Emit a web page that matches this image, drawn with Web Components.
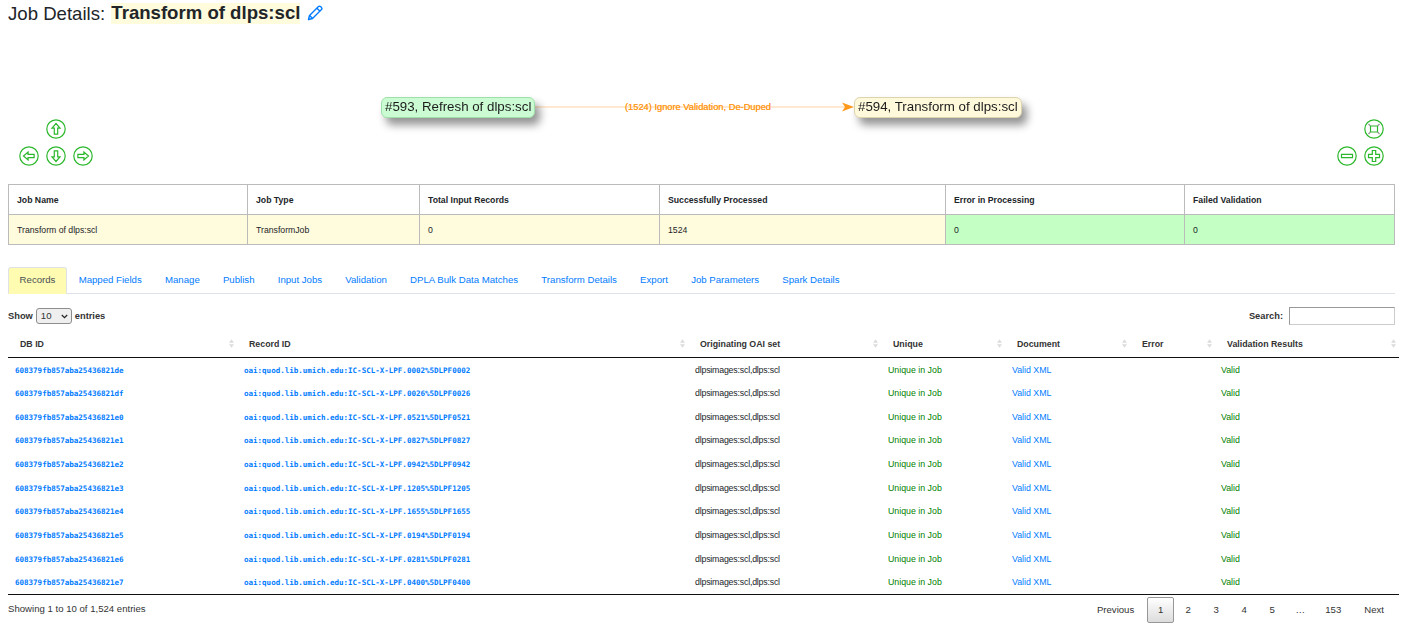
<!DOCTYPE html>
<html lang="en">
<head>
<meta charset="utf-8">
<title>Job Details</title>
<style>
  html, body { margin: 0; background: #fff; }
  body {
    padding: 0 22px 0 8px;
    width: 1387px;
    color: #212529;
    font-family: "Liberation Sans", Arial, sans-serif;
    overflow: hidden;
  }
</style>
</head>
<body>
<job-title>Transform of dlps:scl</job-title>
<job-graph></job-graph>
<job-stats></job-stats>
<job-tabs></job-tabs>
<records-table></records-table>
<records-footer></records-footer>

<script>
(function() {

  /**
   * Attach an open shadow root holding the given markup.
   */
  function stamp(el, html) {
    el.attachShadow({mode: 'open'}).innerHTML = html;
  }

  class JobTitle extends HTMLElement {
    constructor() {
      super();
      stamp(this, `<style>
        :host { display: flex; align-items: center; height: 27px; font-size: 18.6px; white-space: pre; }
        b { background: #fffbdd; padding: 2px 0 3px; line-height: 16px; margin-left: 1px; }
        svg { margin-left: 7px; margin-top: -1px; }
      </style>
      <span>Job Details: </span><b><slot></slot></b>
      <svg width="16" height="16" viewBox="0 0 16 16" fill="none" stroke="#007bff" stroke-width="1.4" stroke-linejoin="round">
        <path d="M1.5 14.5l1-4L11.5 1.6a1.5 1.5 0 0 1 2 0l1 1a1.5 1.5 0 0 1 0 2L5.5 13.5z"/>
        <path d="M10 3.2l3 3M2.6 10.4l3 3"/>
      </svg>`);
    }
  }

  // Nav button glyphs of the graph widget, on a 20x20 box.
  const NAV = {
    up: 'M10 4.5l4 4.6h-2.3v6h-3.4v-6H6z',
    down: 'M10 15.5l4-4.6h-2.3v-6H8.3v6H6z',
    left: 'M4.5 10l4.6-4v2.3h6v3.4h-6V14z',
    right: 'M15.5 10l-4.6-4v2.3h-6v3.4h6V14z',
    minus: 'M4.5 8.3h11v3.4h-11z',
    plus: 'M8.3 4.5h3.4v3.8h3.8v3.4h-3.8v3.8H8.3v-3.8H4.5V8.3h3.8z',
    fit: 'M6.5 7h7v6h-7z'
  };

  class NavButton extends HTMLElement {
    constructor() {
      super();
      const name = this.getAttribute('icon');
      const corners = name === 'fit'
        ? '<path d="M4.5 5l2 2M15.5 5l-2 2M4.5 15l2-2M15.5 15l-2-2" stroke="#999" stroke-width="1.4" fill="none"/>'
        : '';
      stamp(this, `<style>
        :host { display: block; position: absolute; width: 20px; height: 20px; }
        svg { display: block; }
      </style>
      <svg width="20" height="20" viewBox="0 0 20 20" fill="#fff" stroke="#2cb82c" stroke-width="1.2">
        <circle cx="10" cy="10" r="9.2"/>
        <path d="${NAV[name]}"/>
        ${corners}
      </svg>`);
    }
  }

  class GraphNode extends HTMLElement {
    constructor() {
      super();
      stamp(this, `<style>
        :host {
          display: block; position: absolute; box-sizing: border-box; height: 21px;
          padding: 0 3px; font-size: 13.3px; line-height: 17px; white-space: nowrap;
          border: 1px solid var(--edge); background: var(--fill); border-radius: 6px;
          color: #1c1c1c; box-shadow: 5px 7px 8px rgba(0,0,0,.42);
          filter: blur(.25px);
        }
      </style><slot></slot>`);
    }
  }

  class JobGraph extends HTMLElement {
    constructor() {
      super();
      stamp(this, `<style>
        :host { display: block; position: relative; height: 157px; }
        svg.edge { position: absolute; left: 0; top: 0; }
        .label {
          position: absolute; left: 608px; top: 75px; width: 164px; text-align: center;
          font-size: 9.3px; line-height: 11px; color: #ff9a1f; white-space: nowrap;
          text-shadow: 0 0 .6px #ff9a1f, 0 0 1px #fff;
        }
        graph-node:nth-of-type(1) { left: 373px; top: 70px; width: 154px; --fill: #cbfbd2; --edge: #9fe0aa; }
        graph-node:nth-of-type(2) { left: 846px; top: 70px; width: 168px; --fill: #fff9dc; --edge: #ddd3ad; }
        nav-button[icon=up] { left: 38px; top: 92px; }
        nav-button[icon=left] { left: 11px; top: 119px; }
        nav-button[icon=down] { left: 38px; top: 119px; }
        nav-button[icon=right] { left: 65px; top: 119px; }
        nav-button[icon=fit] { left: 1356px; top: 92px; }
        nav-button[icon=minus] { left: 1329px; top: 119px; }
        nav-button[icon=plus] { left: 1356px; top: 119px; }
      </style>
      <svg class="edge" width="1387" height="157" fill="none">
        <path d="M526 80H838" stroke="#ffd3a1" stroke-width="1.2"/>
        <path d="M846 80l-12-4.5 3 4.5-3 4.5z" fill="#ff9a1f"/>
      </svg>
      <graph-node>#593, Refresh of dlps:scl</graph-node>
      <graph-node>#594, Transform of dlps:scl</graph-node>
      <span class="label">(1524) Ignore Validation, De-Duped</span>
      <nav-button icon="up"></nav-button>
      <nav-button icon="left"></nav-button>
      <nav-button icon="down"></nav-button>
      <nav-button icon="right"></nav-button>
      <nav-button icon="fit"></nav-button>
      <nav-button icon="minus"></nav-button>
      <nav-button icon="plus"></nav-button>`);
    }
  }

  class JobStats extends HTMLElement {
    constructor() {
      super();
      const cols = [
        ['Job Name', 'Transform of dlps:scl', 239],
        ['Job Type', 'TransformJob', 172],
        ['Total Input Records', '0', 240],
        ['Successfully Processed', '1524', 286],
        ['Error in Processing', '0', 239, 'ok'],
        ['Failed Validation', '0', 210, 'ok']
      ];
      stamp(this, `<style>
        :host { display: block; font-size: 8.7px; }
        table { border-collapse: collapse; table-layout: fixed; width: 1386px; }
        th, td { border: 1px solid #bbb; height: 30px; padding: 0 8px; text-align: left; box-sizing: border-box; }
        th { font-weight: bold; }
        td { background: #fffbdd; }
        td.ok { background: #c4ffc4; }
      </style>
      <table>
        <colgroup>${cols.map(c => `<col style="width:${c[2]}px">`).join('')}</colgroup>
        <tr>${cols.map(c => `<th>${c[0]}</th>`).join('')}</tr>
        <tr>${cols.map(c => `<td class="${c[3] || ''}">${c[1]}</td>`).join('')}</tr>
      </table>`);
    }
  }

  class JobTabs extends HTMLElement {
    constructor() {
      super();
      const tabs = ['Records', 'Mapped Fields', 'Manage', 'Publish', 'Input Jobs', 'Validation',
        'DPLA Bulk Data Matches', 'Transform Details', 'Export', 'Job Parameters', 'Spark Details'];
      stamp(this, `<style>
        :host {
          display: flex; margin-top: 22px; height: 27px; box-sizing: border-box;
          border-bottom: 1px solid #dee2e6; font-size: 9.64px;
        }
        a {
          box-sizing: border-box; height: 27px; padding: 0 10.6px; line-height: 24px;
          color: #007bff; border: 1px solid transparent; border-radius: 3px 3px 0 0;
          text-decoration: none; white-space: nowrap;
        }
        a.active { background: #fffbb0; color: #495057; border-color: #dee2e6 #dee2e6 #fffbb0; }
      </style>
      ${tabs.map((t, i) => `<a href="#" class="${i ? '' : 'active'}">${t}</a>`).join('')}`);
    }
  }

  class RecordsTable extends HTMLElement {
    constructor() {
      super();
      const heads = [['DB ID', 229], ['Record ID', 451], ['Originating OAI set', 193], ['Unique', 124],
        ['Document', 125], ['Error', 85], ['Validation Results', 184]];
      const rows = [
        ['de', '0002%5DLPF0002'], ['df', '0026%5DLPF0026'], ['e0', '0521%5DLPF0521'],
        ['e1', '0827%5DLPF0827'], ['e2', '0942%5DLPF0942'], ['e3', '1205%5DLPF1205'],
        ['e4', '1655%5DLPF1655'], ['e5', '0194%5DLPF0194'], ['e6', '0281%5DLPF0281'],
        ['e7', '0400%5DLPF0400']
      ];
      const sorter = `<svg class="sort" width="5" height="9" viewBox="0 0 6 10" fill="#dcdcdc"><path d="M3 0l3 4H0zM3 10L0 6h6z"/></svg>`;
      stamp(this, `<style>
        :host { display: block; font-size: 8.8px; }
        .top {
          display: flex; justify-content: space-between; align-items: center;
          height: 20px; margin-top: 12px; font-weight: bold; color: #333; font-size: 9.3px;
        }
        .top label { display: flex; align-items: center; gap: 3px; }
        .select {
          box-sizing: border-box; width: 36px; height: 16px; border: 1px solid #8d8d8d; border-radius: 3px;
          background: #efefef; font-weight: normal; font-size: 9.6px; padding-left: 4px; line-height: 14px;
          display: flex; align-items: center; justify-content: space-between; padding-right: 3px;
        }
        .search { box-sizing: border-box; width: 106px; height: 18px; border: 1px solid #999; border-bottom-color: #ccc; border-right-color: #ccc; margin-left: 3px; }
        table { border-collapse: collapse; table-layout: fixed; width: 1391px; margin-top: 5px; }
        th {
          position: relative; height: 26px; padding: 0 12px; text-align: left; font-weight: bold;
          border-bottom: 1px solid #111; box-sizing: border-box; color: #333;
        }
        .sort { position: absolute; right: 3px; top: 8px; }
        td { height: 23.7px; padding: 1px 7px 0; box-sizing: border-box; white-space: nowrap; overflow: hidden; }
        td:last-child { padding-left: 6px; }
        td.set { letter-spacing: -.2px; }
        tr:last-child td { border-bottom: 1px solid #111; height: 24.4px; padding-top: 0; padding-bottom: 1px; }
        a { color: #007bff; text-decoration: none; }
        a.mono { font-family: "DejaVu Sans Mono", "Liberation Mono", monospace; font-size: 7.53px; font-weight: bold; }
        .good { color: #008000; }
      </style>
      <div class="top">
        <label>Show <span class="select">10
          <svg width="7" height="5" viewBox="0 0 7 5" fill="none" stroke="#222" stroke-width="1.2"><path d="M.8 1l2.7 2.7L6.2 1"/></svg>
        </span> entries</label>
        <label>Search: <span class="search"></span></label>
      </div>
      <table>
        <colgroup>${heads.map(h => `<col style="width:${h[1]}px">`).join('')}</colgroup>
        <tr>${heads.map(h => `<th>${h[0]}${sorter}</th>`).join('')}</tr>
        ${rows.map(r => `<tr>
          <td><a class="mono" href="#">608379fb857aba25436821${r[0]}</a></td>
          <td><a class="mono" href="#">oai:quod.lib.umich.edu:IC-SCL-X-LPF.${r[1]}</a></td>
          <td class="set">dlpsimages:scl,dlps:scl</td>
          <td class="good">Unique in Job</td>
          <td><a href="#">Valid XML</a></td>
          <td></td>
          <td class="good">Valid</td>
        </tr>`).join('')}
      </table>`);
    }
  }

  class RecordsFooter extends HTMLElement {
    constructor() {
      super();
      const pages = ['Previous', '1', '2', '3', '4', '5', '…', '153', 'Next'];
      stamp(this, `<style>
        :host {
          display: flex; justify-content: space-between; align-items: flex-start;
          height: 28px; font-size: 9.6px; color: #333;
        }
        div { margin-top: 8px; }
        nav { display: flex; align-items: center; gap: 2px; margin-top: 2px; }
        span { box-sizing: border-box; width: 26px; height: 26px; line-height: 24px; text-align: center; border: 1px solid transparent; border-radius: 2px; }
        span.wide { width: auto; padding: 0 10px; }
        span.tight { width: auto; padding: 0 9px; }
        span.current { border-color: #979797; background: linear-gradient(#fff, #dcdcdc); width: 27px; margin-right: -1px; }
      </style>
      <div>Showing 1 to 10 of 1,524 entries</div>
      <nav>${pages.map(p => `<span class="${p === '1' ? 'current' : p === '153' ? 'tight' : p.length > 1 ? 'wide' : ''}">${p}</span>`).join('')}</nav>`);
    }
  }

  customElements.define('job-title', JobTitle);
  customElements.define('nav-button', NavButton);
  customElements.define('graph-node', GraphNode);
  customElements.define('job-graph', JobGraph);
  customElements.define('job-stats', JobStats);
  customElements.define('job-tabs', JobTabs);
  customElements.define('records-table', RecordsTable);
  customElements.define('records-footer', RecordsFooter);
})();
</script>
</body>
</html>
